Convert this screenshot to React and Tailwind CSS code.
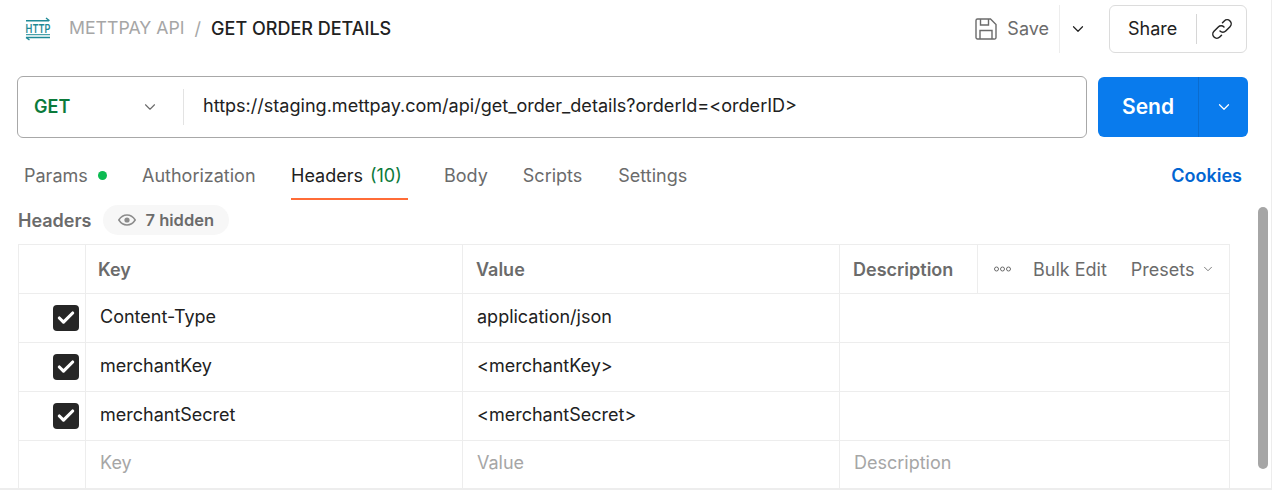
import React from "react";
import { ChevronDown, Check } from "lucide-react";

const F = "font-['Inter',sans-serif]";

function HttpIcon() {
  return (
    <svg width="40" height="28" viewBox="0 0 40 28" fill="none" className="shrink-0">
      <path d="M8 5.700H31M28 3L31.500 5.700" stroke="#1f8a96" strokeWidth="1.400" />
      <path d="M8 22.500H32M8 22.500L11.500 25" stroke="#1f8a96" strokeWidth="1.400" />
      <text transform="translate(20 18) scale(0.74 1)" textAnchor="middle" fontSize="12.400" fill="#1f8a96" fontFamily="Inter, sans-serif" fontWeight="600">HTTP</text>
      <path d="M8 19.700H32" stroke="#1f8a96" strokeWidth="1" />
    </svg>
  );
}

function SaveIcon() {
  return (
    <svg width="22" height="22" viewBox="0 0 22 22" fill="none" stroke="#6b6b6b" strokeWidth="1.4">
      <path d="M1 2.500A1.500 1.500 0 0 1 2.500 1h13l5.500 5.500V19.500A1.500 1.500 0 0 1 19 21H2.500A1.500 1.500 0 0 1 1 19.500Z" />
      <path d="M5.500 1V7H13.500V1" />
      <path d="M5 21V12.500H17V21" />
    </svg>
  );
}

function LinkIcon() {
  return (
    <svg width="24" height="24" viewBox="0 0 24 24" fill="none" stroke="#242424" strokeWidth="1.5" strokeLinecap="round">
      <path d="M10 14a4 4 0 0 0 5.700 0l4.300-4.300a4 4 0 0 0-5.700-5.700L12.500 5.800" />
      <path d="M14 10a4 4 0 0 0-5.700 0L4 14.300A4 4 0 0 0 9.700 20l1.800-1.800" />
    </svg>
  );
}

function EyeIcon() {
  return (
    <svg width="18" height="12" viewBox="0 0 18 12" fill="none">
      <path d="M.8 6C3 2.600 5.800 1 9 1s6 1.600 8.200 5C15 9.400 12.200 11 9 11S3 9.400.8 6Z" stroke="#8c8c8c" strokeWidth="1.500" />
      <circle cx="9" cy="6" r="2.600" fill="#8c8c8c" />
    </svg>
  );
}

function Box() {
  return (
    <div className="w-[26px] h-[26px] rounded-[4px] bg-[#262626] flex items-center justify-center">
      <Check size={20} strokeWidth={3.8} className="text-white" />
    </div>
  );
}

function Row({ k, v, check, last }) {
  const color = check ? "text-[#212121]" : "text-[#a6a6a6]";
  const pad = last ? "pb-[4px]" : "pb-[3px]";
  return (
    <div className={`flex ${last ? "h-[47px]" : "h-[49px] border-b border-[#ededed]"} text-[18px] ${color}`}>
      <div className="w-[67px] shrink-0 border-r border-[#ededed] flex items-center justify-end pr-[6px]">
        {check && <Box />}
      </div>
      <div className={`w-[377px] shrink-0 border-r border-[#ededed] flex items-center pl-[14px] ${pad}`}>{k}</div>
      <div className={`w-[377px] shrink-0 border-r border-[#ededed] flex items-center pl-[14px] ${pad}`}>{v}</div>
      <div className={`flex-1 flex items-center pl-[14px] ${pad}`}>{last ? "Description" : ""}</div>
    </div>
  );
}

export default function App() {
  return (
    <div className={`${F} relative w-[1275px] h-[493px] overflow-hidden bg-white`}>
      <div className="w-[1272px] h-[490px] border-r border-b-2 border-[#ededed] flex flex-col">
        {/* title bar */}
        <div className="h-[58px] shrink-0 flex items-center pl-[18px] pr-[24px]">
          <HttpIcon />
          <div className="flex items-center ml-[11px] text-[18px] pb-[2px]">
            <span className="text-[#a6a6a6] text-[17.7px]">METTPAY API</span>
            <span className="text-[#a6a6a6] ml-[10px]">/</span>
            <span className="text-[#212121] font-medium ml-[10px]">GET ORDER DETAILS</span>
          </div>
          <div className="ml-auto flex items-center">
            <SaveIcon />
            <span className="text-[#6b6b6b] text-[18px] ml-[10px] pb-[2px]">Save</span>
            <div className="w-px h-[48px] bg-[#ededed] ml-[10px]" />
            <ChevronDown size={18} strokeWidth={1.6} className="text-[#212121] ml-[9px]" />
            <div className="ml-[22px] w-[138px] h-[48px] rounded-[6px] border border-[#dcdcdc] flex items-center">
              <span className="text-[18px] text-[#212121] ml-[18px] pb-[2px]">Share</span>
              <div className="w-px h-[30px] bg-[#d6d6d6] ml-[19px]" />
              <span className="ml-[13px] flex"><LinkIcon /></span>
            </div>
          </div>
        </div>

        {/* url bar */}
        <div className="mt-[18px] h-[62px] shrink-0 flex items-center pl-[17px] pr-[23px]">
          <div className="w-[1070px] h-[62px] rounded-[6px] border border-[#a8a8a8] flex items-center">
            <div className="w-[166px] h-[36px] border-r border-[#e3e3e3] flex items-center pl-[16px] pr-[24px] justify-between">
              <span className="text-[#0b7a3b] font-semibold text-[18px] pb-[2px]">GET</span>
              <ChevronDown size={18} strokeWidth={1.5} className="text-[#6b6b6b]" />
            </div>
            <span className="ml-[19px] text-[18.06px] text-[#212121] pb-[2px]">{"https://staging.mettpay.com/api/get_order_details?orderId=<orderID>"}</span>
          </div>
          <div className="ml-[11px] w-[150px] h-[60px] rounded-[6px] bg-[#097bed] flex items-center text-white">
            <div className="w-[101px] h-full border-r border-[#0a6ccf] flex items-center justify-center font-semibold text-[21px]">Send</div>
            <div className="flex-1 flex items-center justify-center">
              <ChevronDown size={18} strokeWidth={1.6} />
            </div>
          </div>
        </div>

        {/* tabs */}
        <div className="mt-[18px] h-[44px] shrink-0 flex pl-[24px] pr-[29px] text-[18px] text-[#6b6b6b]">
          <div className="flex items-center h-[39px] w-[118px]">
            Params
            <span className="ml-[10px] w-[9px] h-[9px] rounded-full bg-[#0cbb52]" />
          </div>
          <div className="flex items-center h-[39px] w-[149px]">Authorization</div>
          <div className="flex items-start h-[44px] w-[117px] border-b-2 border-[#ff6c37] text-[#212121]">
            <div className="h-[39px] flex items-center">
              Headers<span className="ml-[7px] text-[#0b7a3b]">(10)</span>
            </div>
          </div>
          <div className="flex items-center h-[39px] ml-[36px]">Body</div>
          <div className="flex items-center h-[39px] ml-[35px]">Scripts</div>
          <div className="flex items-center h-[39px] ml-[36px]">Settings</div>
          <div className="flex items-center h-[39px] ml-auto text-[#0265d2] font-semibold">Cookies</div>
        </div>

        {/* headers sub title */}
        <div className="mt-[5px] h-[30px] shrink-0 flex items-center pl-[18px]">
          <span className="font-semibold text-[18px] text-[#6b6b6b]">Headers</span>
          <div className="ml-[11px] h-[30px] w-[126px] rounded-full bg-[#f7f7f7] flex items-center pl-[15px]">
            <EyeIcon />
            <span className="ml-[10px] font-semibold text-[16.5px] text-[#6b6b6b]">7 hidden</span>
          </div>
        </div>

        {/* table */}
        <div className="mt-[9px] ml-[18px] w-[1212px] border-l border-r border-t border-[#ededed] flex-1">
          <div className="flex h-[49px] border-b border-[#ededed] text-[#6b6b6b]">
            <div className="w-[67px] shrink-0 border-r border-[#ededed]" />
            <div className="w-[377px] shrink-0 border-r border-[#ededed] flex items-center pl-[12px] font-semibold text-[18px]">Key</div>
            <div className="w-[377px] shrink-0 border-r border-[#ededed] flex items-center pl-[13px] font-semibold text-[18px]">Value</div>
            <div className="w-[138px] shrink-0 border-r border-[#ededed] flex items-center pl-[13px] font-semibold text-[18px]">Description</div>
            <div className="flex-1 flex items-center text-[18px] pl-[16px]">
              <svg width="17" height="6" viewBox="0 0 17 6" fill="none" stroke="#6b6b6b" strokeWidth="1">
                <circle cx="2.500" cy="3" r="2" /><circle cx="8.500" cy="3" r="2" /><circle cx="14.500" cy="3" r="2" />
              </svg>
              <span className="ml-[22px]">Bulk Edit</span>
              <span className="ml-[24px]">Presets</span>
              <ChevronDown size={14} strokeWidth={1.5} className="ml-[6px]" />
            </div>
          </div>
          <Row k="Content-Type" v="application/json" check />
          <Row k="merchantKey" v="<merchantKey>" check />
          <Row k="merchantSecret" v="<merchantSecret>" check />
          <Row k="Key" v="Value" last />
        </div>
      </div>
      {/* scrollbar thumb */}
      <div className="absolute left-[1258px] top-[207px] w-[10px] h-[262px] rounded-full bg-[#a6a6a6]" />
    </div>
  );
}
